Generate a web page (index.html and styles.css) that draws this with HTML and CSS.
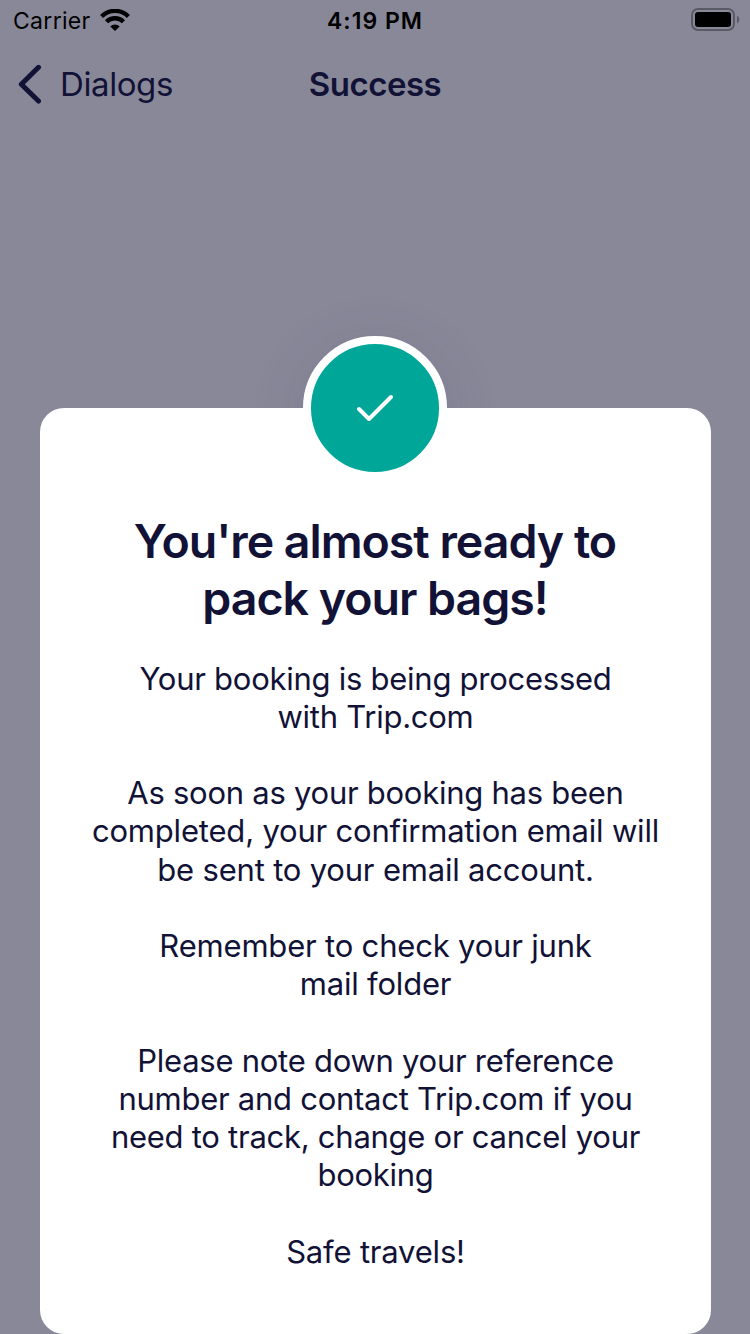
FILE: index.html
```html
<!DOCTYPE html>
<html lang="en">
<head>
<meta charset="utf-8">
<title>Success</title>
<link rel="stylesheet" href="styles.css">
</head>
<body>
<div class="screen">
  <header class="status-bar">
    <div class="status-left">
      <span class="carrier">Carrier</span>
      <svg class="wifi" width="30" height="22" viewBox="0 0 30 22" fill="none" stroke="#000">
        <path d="M1.6 7.4 A19 19 0 0 1 28.4 7.4" stroke-width="4.3"/>
        <path d="M6.5 12.8 A12 12 0 0 1 23.5 12.8" stroke-width="4.3"/>
        <path d="M10.3 17.4 A6.6 6.6 0 0 1 19.7 17.4 L15 22 Z" fill="#000" stroke="none"/>
      </svg>
    </div>
    <span class="time">4:19 PM</span>
    <div class="status-right">
      <svg class="battery" width="50" height="24" viewBox="0 0 50 24">
        <rect x="1" y="1" width="42" height="21" rx="6" fill="none" stroke="#5a5966" stroke-width="2"/>
        <rect x="4" y="4" width="36" height="15" rx="3" fill="#000"/>
        <path d="M46 7.5 Q48.3 9 48.3 11.5 Q48.3 14 46 15.5 Z" fill="#5a5966"/>
      </svg>
    </div>
  </header>
  <nav class="nav-bar">
    <a class="back">
      <svg width="24" height="40" viewBox="0 0 24 40" fill="none" stroke="#111236" stroke-width="5" stroke-linecap="round" stroke-linejoin="round">
        <path d="M20.5 3.3 L3.3 20.2 L20.5 37"/>
      </svg>
      <span class="back-label">Dialogs</span>
    </a>
    <h1 class="nav-title">Success</h1>
    <span></span>
  </nav>
  <main class="dialog">
    <div class="badge">
      <svg width="40" height="30" viewBox="0 0 40 30" fill="none" stroke="#fff" stroke-width="4" stroke-linecap="round" stroke-linejoin="round">
        <path d="M4 16 L14 26 L36 4"/>
      </svg>
    </div>
    <h2 class="headline">You're almost ready to<br>pack your bags!</h2>
    <div class="message">
      <p>Your booking is being processed<br>with Trip.com</p>
      <p>As soon as your booking has been<br><span class="loose">completed, your confirmation email will<br>be sent to your email account.</span></p>
      <p class="loose">Remember to check your junk<br>mail folder</p>
      <p>Please note down your reference<br>number and contact Trip.com if you<br>need to track, change or cancel your<br>booking</p>
      <p class="loose">Safe travels!</p>
    </div>
  </main>
</div>
</body>
</html>
```
FILE: styles.css
```css
body {
  margin: 0;
  font-family: Inter, "Liberation Sans", sans-serif;
  color: #111236;
}
.screen {
  width: 750px;
  height: 1334px;
  overflow: hidden;
  isolation: isolate;
  background: #898899;
  display: flex;
  flex-direction: column;
}
.status-bar {
  height: 40px;
  display: grid;
  grid-template-columns: 1fr auto 1fr;
  grid-template-rows: 40px;
  align-items: center;
  color: #000;
  font-size: 23px;
  line-height: 28px;
  white-space: nowrap;
}
.status-left {
  display: flex;
  align-items: center;
  gap: 9px;
  padding-left: 13px;
}
.carrier { letter-spacing: 0.3px; padding-top: 2px; }
.time { font-weight: 570; letter-spacing: 1px; padding-top: 2px; }
.status-right {
  display: flex;
  justify-content: flex-end;
  padding-right: 9px;
}
.nav-bar {
  height: 88px;
  display: grid;
  grid-template-columns: 1fr auto 1fr;
  align-items: center;
  white-space: nowrap;
}
.back {
  display: flex;
  align-items: center;
  gap: 18px;
  padding-left: 18px;
}
.back-label { font-size: 33px; line-height: 40px; letter-spacing: -0.4px; }
.nav-title {
  margin: 0;
  font-size: 33px;
  line-height: 40px;
  font-weight: 600;
  letter-spacing: -0.5px;
}
.dialog {
  width: 671px;
  height: 926px;
  margin: 280px 0 0 40px;
  border-radius: 24px;
  background: #fff;
  display: flex;
  flex-direction: column;
  align-items: center;
  flex-shrink: 0;
  text-align: center;
  white-space: nowrap;
}
.badge {
  position: relative;
  box-sizing: border-box;
  width: 144px;
  height: 144px;
  margin-top: -72px;
  margin-right: 1px;
  flex-shrink: 0;
  border: 8px solid #fff;
  border-radius: 50%;
  background: #00a698;
  display: flex;
  align-items: center;
  justify-content: center;
}
/* Shadow sits behind the dialog so it only shows on the backdrop. */
.badge::before {
  content: "";
  position: absolute;
  inset: -8px;
  z-index: -1;
  border-radius: 50%;
  box-shadow: 0 8px 56px rgba(37, 60, 90, 0.14);
}
.headline {
  margin: 33px 1px 0 0;
  font-size: 46.5px;
  line-height: 57.3px;
  font-weight: 590;
  letter-spacing: -1.02px;
}
.message {
  margin-top: 32.13px;
  display: flex;
  flex-direction: column;
  gap: 38.19px;
  font-size: 31px;
  line-height: 38.19px;
  letter-spacing: -0.26px;
}
.message p { margin: 0; }
.loose { letter-spacing: -0.19px; }
```
